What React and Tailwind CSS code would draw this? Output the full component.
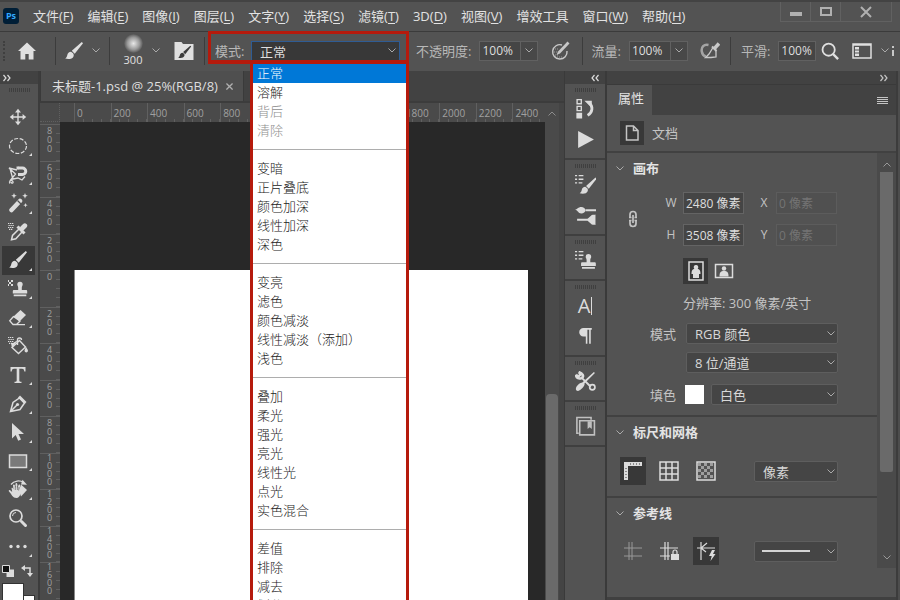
import React from 'react';
import clsx from 'clsx';

const menus = [
  ['文件', 'F'], ['编辑', 'E'], ['图像', 'I'], ['图层', 'L'], ['文字', 'Y'], ['选择', 'S'],
  ['滤镜', 'T'], ['3D', 'D'], ['视图', 'V'], ['增效工具'], ['窗口', 'W'], ['帮助', 'H'],
];

const blendGroups = [
  ['正常', '溶解', '背后', '清除'],
  ['变暗', '正片叠底', '颜色加深', '线性加深', '深色'],
  ['变亮', '滤色', '颜色减淡', '线性减淡（添加）', '浅色'],
  ['叠加', '柔光', '强光', '亮光', '线性光', '点光', '实色混合'],
  ['差值', '排除', '减去', '划分'],
];
const disabledModes = ['背后', '清除'];

// labels under the open blend menu stay empty
const hTicks = ['0', '200', '400', '600', '800', '', '', '', '', '1800', '2000', '2200', '2400'];
const vTicks = ['800', '600', '400', '200', '0', '200', '400', '600', '800', '1000', '1200', '1400', '1600'];

function Icon({ size = 'size-5', box = 20, children }) {
  return (
    <svg viewBox={`0 0 ${box} ${box}`} className={clsx('shrink-0', size)} fill="none" stroke="currentColor" strokeWidth="1.5" aria-hidden="true">
      {children}
    </svg>
  );
}

const solid = { fill: 'currentColor', stroke: 'none' };

const brushShape = (
  <g {...solid}>
    <path d="M17.800 1 7.800 9.800l2.900 3L19 2.200z" />
    <path d="M7 10.700c-2 0-3.400 1.400-3.700 3.300-.2 1.500-.9 2.800-2.200 3.600 3.500 1 7.400.4 8.400-2.200.5-1.300.2-2.400-.4-3.200z" />
  </g>
);

const stampShape = (
  <path {...solid} d="M10 2a3 3 0 0 1 3 3c0 1.500-1 2-1 3.500V11h4.500c1 0 1.500.5 1.500 1.500V15H2v-2.500c0-1 .5-1.500 1.500-1.500H8V8.500C8 7 7 6.500 7 5a3 3 0 0 1 3-3zM3 16.200h14V18H3z" />
);

const listShape = (
  <path strokeWidth="1.300" d="M0 1.500h2M3.500 1.500H8M0 5h2M3.500 5H8M0 8.500h2M3.500 8.500H7" />
);

const patternShape = (
  <path strokeWidth="1.200" strokeDasharray="1.300 .7" d="M0 1.500h6M.5 3.500h6M0 5.500h6M1 7.300h4" />
);

const tools = [
  ['移动工具', <>
    <path strokeWidth="1.400" d="M10 3v14M3 10h14" />
    <path {...solid} d="M10 1.800 13 5.400H7zM10 18.200l3-3.600H7zM1.800 10l3.600-3v6zM18.200 10l-3.600-3v6z" />
  </>],
  ['椭圆选框工具', <ellipse cx="10" cy="10" rx="8.500" ry="7.500" strokeWidth="1.200" strokeDasharray="4 1.600" />, 1],
  ['磁性套索工具', <>
    <path strokeWidth="1.300" d="m9 5-8-2 6.500 6L3 14.500l7-1.500 4 2 3-3.500M2 18.500c-1.500-2 1-4 2.500-2.500S4 19.500 3 17M2 3.500l3 11" />
    <path strokeWidth="3" d="M10 3h4.500a3 3 0 0 1 0 6.500H12" />
    <path {...solid} d="M8.500 1.500h2v3h-2zM10 8h2v3h-2z" />
  </>, 1],
  ['魔棒工具', <>
    <path strokeWidth="4.500" strokeLinecap="round" d="m3.500 17 8.500-9" />
    <path stroke="#535353" strokeWidth="1.200" d="m9.500 7.500 3.500 3.500" />
    <path {...solid} d="m6 0 .8 2 2 .8-2 .8L6 5.700l-.8-2.100-2-.8 2-.8zM17 0l.8 2 2 .8-2 .8-.8 2.100-.8-2.100-2-.8 2-.8zM17.500 10l.6 1.600 1.600.6-1.600.6-.6 1.700-.6-1.700-1.600-.6 1.600-.6z" />
  </>, 1],
  ['吸管工具', <>
    {patternShape}
    <path strokeWidth="1.500" d="m11 7-6.500 6.500-1 4.300 4.300-1L14 10" />
    <path strokeWidth="4.800" strokeLinecap="round" d="m14.500 6 2.300-2.300" />
    <path strokeWidth="3" d="m9.500 4.500 7 7" />
  </>],
  ['画笔工具', brushShape, 1],
  ['仿制图章工具', <>
    <g transform="translate(3 1) scale(.9)">{stampShape}</g>
    <path {...solid} d="M-1 1h2v2h-2zM3 1h2v2H3zM1 3h2v2H1zM-1 5h2v2h-2zM3 5h2v2H3z" />
  </>, 1],
  ['橡皮擦工具', <>
    <path {...solid} d="M12.500 2 18 7l-6.500 6.500-6-5z" />
    <path strokeWidth="1.300" d="m5.500 8.500-3.800 4.200 3.300 3.800h3.500l3.500-3.500zM8 16.700h9" />
  </>, 1],
  ['油漆桶工具', <>
    {patternShape}
    <path strokeWidth="1.400" d="M4 11.500 11.500 4.500l6 6.500-7 6.500zM9.500 9V4a2 2 0 0 1 4 0" />
    <path {...solid} d="M18 11c1.300 1.800 2 3 2 4a1.800 1.800 0 0 1-3.500 0c0-1 .5-2.200 1.500-4zM3 7h2l5-3-6 8z" />
  </>],
  ['横排文字工具', <path {...solid} d="M2.500 2h15v4.500h-1.200c-.3-2-.8-2.700-2.300-2.700h-2.700v11.700c0 1 .5 1.200 2.200 1.300V18H6.500v-1.200c1.700-.1 2.200-.3 2.200-1.300V3.800H6c-1.500 0-2 .7-2.300 2.700H2.500z" />, 1],
  ['钢笔工具', <>
    <path strokeWidth="1.500" d="M2.500 17.500 5 8.500l6.500-4.500 5 5-4.500 6.500zM2.500 17.500 9 11" />
    <path {...solid} d="m12 1.500 6.500 6.500-2 2L10 3.500z" />
    <circle {...solid} cx="9.500" cy="10.500" r="1.600" />
  </>, 1],
  ['路径选择工具', <path {...solid} d="M4 1v15.500l3.700-3.500 2.500 5.800 2.800-1.200-2.500-5.600H16z" />, 1],
  ['矩形工具', <rect x="1.500" y="4" width="17" height="12.500" fill="#7a7a7a" />, 1],
  ['抓手工具', <>
    <path {...solid} d="M13 5.500 19 11l-6 6.500-2-6z" />
    <path strokeWidth="1.300" d="M3 5.500C6 1.500 12 1 15.500 3.500" />
    <path {...solid} d="m14.500.8 4.500 5-6-.3zM3.500 9c.8-.5 1.500 0 2 1.500L5 6.500c0-1.200 1.500-1.400 1.800-.2l.7 3V5c0-1.200 1.600-1.200 1.800 0l.3 4.300.9-3.300c.4-1 1.800-.7 1.600.4l-.5 4 1-1.500c.7-1 2-.3 1.500.8C12.500 13 12.500 19 8.500 19 4.500 19 4 15.500 1 12.500c-.8-1 .3-2 1.200-1.300l2 1.800z" />
    <path stroke="#535353" strokeWidth=".6" d="M7.300 7v4M9.400 7v4M11 8l-.4 3.500" />
  </>, 1],
  ['缩放工具', <>
    <circle cx="8" cy="8" r="6" strokeWidth="1.700" />
    <path strokeWidth="1" d="M4.500 8A3.500 3.500 0 0 1 8 4.500" />
    <path strokeWidth="3" strokeLinecap="round" d="m13.500 13.500 4 4" />
  </>],
  ['编辑工具栏', <g {...solid}><circle cx="3" cy="9.500" r="1.700" /><circle cx="10" cy="9.500" r="1.700" /><circle cx="17" cy="9.500" r="1.700" /></g>, 1],
];

const panelGroups = [
  [
    ['历史记录', <>
      <path strokeWidth="1.300" d="M2 1.500h4v4H2zM2 8h4v4H2z" />
      <path {...solid} d="M1.300 14h5.500v5.500H1.300zM9 2.500h7v7z" />
      <path strokeWidth="2.600" d="M13.500 4.500c4 3.500 3.500 9-1.500 12" />
    </>],
    ['动作', <path {...solid} d="M3 2 18 10 3 18z" />],
  ],
  [
    ['画笔设置', <>{listShape}<g transform="translate(3.500 2.500) scale(.9)">{brushShape}</g></>],
    ['画笔', <>
      <path strokeWidth="1.800" d="M10 5h10M2 14h11" />
      <path {...solid} d="M0 4.500c2 0 3-2.500 6-2.500 2 0 4 1.500 4 3S8 8 6 8C3 8 3 5 0 4.500zM12 13l4-3.500c1.500-.5 3 0 3.500-.5v10c-.500-.500-2 0-3.500-.5L12 15z" />
    </>],
  ],
  [
    ['仿制源', <>{listShape}<g transform="translate(4 2) scale(.88)">{stampShape}</g></>],
  ],
  [
    ['字符', null],
    ['段落', <path {...solid} d="M9 2h7v1.500h-1V17h-1.500V3.500h-1.700V17h-1.500v-7H8a4 4 0 0 1 0-8z" />],
  ],
  [
    ['工具预设', <>
      <path strokeWidth="1.800" d="M6 6l9 9" />
      <path {...solid} d="M18 1 19 2 9 12c1 2-4 7-6 7s-2.500-1.500-2-3c.5-2 4-5 6-5z" />
      <path strokeWidth="2.400" d="M1 3.500 3 5.500 5.500 3 3.500 1M1 3.500C1 7 4 8 6.500 6.500S7 2 3.500 1" />
      <circle cx="16.500" cy="15.500" r="2.500" strokeWidth="1.600" />
    </>],
  ],
  [
    ['库', <g opacity=".8">
      <path strokeWidth="1.500" d="M3.500 16.500H1.800V1.500h13.500v2M4.500 4.500h14v13.500h-14z" />
      <path {...solid} d="M12 5h4v7.500l-2-1.800-2 1.800z" />
    </g>],
  ],
];

function Chevron({ className }) {
  return (
    <svg viewBox="0 0 8 5" className={clsx('h-[5px] w-2 shrink-0', className)} fill="none" stroke="currentColor" aria-hidden="true">
      <path d="m.5.500 3.500 3.500L7.500.5" />
    </svg>
  );
}

function Divider() {
  return <div className="h-7 w-px shrink-0 bg-[#3c3c3c]" />;
}

function Grip() {
  return (
    <svg viewBox="0 0 21 4" className="mx-auto h-1 w-[21px]" stroke="#3f3f3f" strokeDasharray="1 1" strokeWidth="4" aria-hidden="true">
      <path d="M0 2h21" />
    </svg>
  );
}

function PercentField({ id, label, arrow }) {
  return (
    <div className="flex shrink-0 items-center">
      <label htmlFor={id} className="mr-2 text-[#b8b8b8]">{label}:</label>
      <input id={id} defaultValue="100%" className={clsx('h-5 border border-[#616161] bg-[#454545] px-0.5 text-[12px] text-[#dedede]', arrow ? 'w-[42px]' : 'w-[38px]')} />
      {arrow && (
        <button aria-label={`${label}选项`} className="flex h-5 w-[17px] items-center justify-center border border-l-0 border-[#616161] bg-[#484848] text-[#aaa]">
          <Chevron />
        </button>
      )}
    </div>
  );
}

function Select({ id, label, value, className }) {
  return (
    <div className={clsx('relative flex items-center', className)}>
      <select id={id} aria-label={label} className="h-[21px] w-full appearance-none rounded-xs border border-[#5e5e5e] bg-[#454545] px-2 pb-0.5 text-[#d8d8d8]">
        <option>{value}</option>
      </select>
      <Chevron className="pointer-events-none absolute right-[3px] text-[#aaa]" />
    </div>
  );
}

function MenuBar() {
  return (
    <header className="flex h-8 shrink-0 items-center border-t-2 border-b border-t-[#434343] border-b-[#3b3b3b] bg-[#535353] text-[#e2e2e2]">
      <div className="mb-0.5 ml-[3px] flex size-4 shrink-0 items-center justify-center rounded-[3px] bg-[#001e36] text-[9px] font-bold text-[#31a8ff]">Ps</div>
      <nav className="mb-0.5 ml-[14px] flex gap-[14px] whitespace-nowrap">
        {menus.map(([name, key]) => (
          <button key={name}>{name}{key && <>(<u className="underline-offset-2">{key}</u>)</>}</button>
        ))}
      </nav>
      <div className="mr-2 ml-auto flex h-5 shrink-0 self-start border border-t-0 border-[#616161] text-[#b0b0b0]">
        <button aria-label="最小化" className="flex w-[30px] items-center justify-center border-r border-[#616161]">
          <span className="mt-1 h-1 w-3 bg-current" />
        </button>
        <button aria-label="最大化" className="flex w-[30px] items-center justify-center border-r border-[#616161]">
          <span className="h-[9px] w-3 border-2 border-current" />
        </button>
        <button aria-label="关闭" className="flex w-[50px] items-center justify-center">
          <Icon size="size-3" box={12}><path strokeWidth="2" d="m1 1 10 10M11 1 1 11" /></Icon>
        </button>
      </div>
    </header>
  );
}

function BlendMenu() {
  return (
    <ul role="listbox" aria-label="混合模式" className="absolute top-[25px] left-[42px] z-20 w-[159px] border-[3px] border-t-4 border-[#b51a0c] bg-white text-[13px] leading-[19px] text-[#222]">
      {blendGroups.map((group, i) => (
        <React.Fragment key={i}>
          {i > 0 && <li role="separator" className="flex h-[19px] items-center"><span className="h-px w-full bg-[#adadad]" /></li>}
          {group.map(mode => (
            <li
              key={mode}
              role="option"
              aria-selected={mode === '正常'}
              aria-disabled={disabledModes.includes(mode)}
              className={clsx(
                'h-[19px] pl-1 font-light whitespace-nowrap',
                mode === '正常' && 'bg-[#0078d7] text-white',
                disabledModes.includes(mode) && 'text-[#8e8e8e]',
              )}
            >
              {mode}
            </li>
          ))}
        </React.Fragment>
      ))}
    </ul>
  );
}

function OptionsBar() {
  return (
    <div className="flex h-[39px] shrink-0 items-center bg-[#535353] pb-0.5 text-[#e0e0e0]">
      <div className="ml-[3px] h-5 w-0.5 shrink-0 border-l-2 border-dotted border-[#3f3f3f]" />
      <button aria-label="主页" className="mr-[18px] ml-3">
        <Icon><path {...solid} d="M10 1.500 19 10h-2.500v8.500h-4.800V13H8.300v5.500H3.500V10H1z" /></Icon>
      </button>
      <Divider />
      <button aria-label="画笔预设" className="ml-2 flex items-center text-[#e0e0e0]">
        <Icon>{brushShape}</Icon>
        <Chevron className="ml-2 text-[#aaa]" />
      </button>
      <div className="ml-[9px]"><Divider /></div>
      <button aria-label="画笔大小" className="ml-3 flex items-center">
        <span className="flex w-[22px] flex-col items-center text-[11px] leading-[14px]">
          <span className="size-[19px] rounded-full bg-[radial-gradient(circle,#e8e8e8,#9a9a9a_45%,#535353_72%)]" />
          300
        </span>
        <Chevron className="ml-2 text-[#aaa]" />
      </button>
      <button aria-label="画笔设置面板" className="mr-[10px] ml-[14px]">
        <Icon>
          <path {...solid} d="M.5 1h7L9 3h10.500v16H.5z" />
          <g color="#3c3c3c" transform="translate(3.500 4) scale(.72)">{brushShape}</g>
        </Icon>
      </button>
      <Divider />
      <div className="relative ml-[3px] flex h-8 w-[201px] shrink-0 items-center">
        <label htmlFor="blend" className="ml-[7px] w-9 text-[#b8b8b8]">模式:</label>
        <div className="relative flex w-[149px] items-center">
          <select id="blend" className="h-5 w-full appearance-none border border-[#2f5c94] bg-[#383838] px-2 pb-0.5 text-[#dedede]">
            <option>正常</option>
          </select>
          <Chevron className="pointer-events-none absolute right-1 text-[#aaa]" />
        </div>
        <div className="pointer-events-none absolute inset-x-0 -top-1 z-30 h-[33px] border-[3px] border-b-4 border-[#b51a0c]" />
        <BlendMenu />
      </div>
      <div className="ml-[7px]"><PercentField id="opacity" label="不透明度" arrow /></div>
      <button aria-label="压力控制不透明度" className="mr-3 ml-3 text-[#c8c8c8]">
        <Icon>
          <path strokeWidth="1.400" d="M12 4a7.200 7.200 0 1 0 5 6" />
          <path strokeWidth="1" strokeDasharray="1 1" d="M3 8h6M2 11h6M3 14h5M5 16h7" opacity=".6" />
          <path {...solid} d="M17.500.500 19.500 2.500 10 12.500l-3.500 1.500L8 10.500z" />
        </Icon>
      </button>
      <Divider />
      <div className="ml-2"><PercentField id="flow" label="流量" arrow /></div>
      <button aria-label="喷枪" className="mr-[10px] ml-3 text-[#c8c8c8]">
        <Icon>
          <path strokeWidth="2.500" d="M8.500 4C4 3 1 6 1.800 10.500c.5 3 2 4.500 4 5" opacity=".7" />
          <path strokeWidth="1.300" d="M13 6.500 9 13l-3.500 3.500H11l5-.5V9.500z" />
          <path strokeWidth="3.500" d="m14 8 5-5.500" />
          <path strokeWidth="2" d="m12 5.500 4.500 4.500" />
        </Icon>
      </button>
      <Divider />
      <div className="ml-[10px]"><PercentField id="smooth" label="平滑" /></div>
      <button aria-label="搜索" className="ml-[5px]">
        <Icon size="size-[18px]"><circle cx="8.500" cy="8.500" r="6.800" strokeWidth="2" /><path strokeWidth="2.600" d="m13.500 13.500 5.500 5.500" /></Icon>
      </button>
      <button aria-label="工作区" className="ml-[13px] flex items-center">
        <Icon><path strokeWidth="1.500" d="M1 3h18v14H1zM1 4h18" /><path {...solid} d="M3 6h4v9H3z" /><path stroke="#535353" strokeWidth="1" d="M3 9h4M3 12h4" /></Icon>
        <Chevron className="ml-[9px] text-[#aaa]" />
      </button>
      <svg viewBox="0 0 3 14" className="ml-0.5 h-[14px] w-[3px] shrink-0" fill="#c8c8c8" aria-hidden="true"><path d="M1 2h2v2H1zM1 6h2v6H1z" /></svg>
    </div>
  );
}

function Toolbar() {
  return (
    <aside className="w-10 shrink-0 border-r-2 border-[#3c3c3c] bg-[#535353] text-[#dcdcdc]">
      <div className="flex h-[13px] items-center bg-[#424242] pl-[3px]">
        <Icon size="size-2" box={8}><path strokeWidth="1.200" d="m.5 1 2.500 3L.5 7M4.500 1 7 4 4.500 7" /></Icon>
      </div>
      <div className="h-[19px] pt-1"><Grip /></div>
      <div className="flex h-[458px] flex-col">
        {tools.map(([name, shape, more]) => (
          <button
            key={name}
            aria-label={name}
            className={clsx('relative ml-0.5 flex w-[33px] flex-1 items-center pl-1.5', name === '画笔工具' && 'bg-[#383838]')}
          >
            <Icon>{shape}</Icon>
            {more && <svg viewBox="0 0 4 4" className="absolute right-[3px] bottom-1 size-[3px]" fill="currentColor" aria-hidden="true"><path d="M4 0v4H0z" /></svg>}
          </button>
        ))}
      </div>
      <div className="flex h-[18px] items-center justify-between pt-0.5 pr-[5px] pl-0.5">
        <button aria-label="默认颜色">
          <Icon size="size-3" box={12}>
            <path {...solid} d="M4.500 4.500H12V12H4.500z" />
            <path fill="#111" strokeWidth="1" d="M.5.500h7v7h-7z" />
          </Icon>
        </button>
        <button aria-label="切换颜色">
          <Icon size="size-3" box={12}>
            <path strokeWidth="1.500" d="M3 3h6v6" />
            <path {...solid} d="M0 3 4 0v6zM9 12 6 8h6z" />
          </Icon>
        </button>
      </div>
      <div className="relative mt-1 ml-0.5 h-8 w-8">
        <button aria-label="背景色" className="absolute top-3 left-3 size-[21px] border border-[#333] bg-white" />
        <button aria-label="前景色" className="absolute top-0 left-0 size-[22px] border border-[#333] bg-white" />
      </div>
    </aside>
  );
}

function Document() {
  return (
    <main className="flex min-w-0 flex-1 flex-col bg-[#424242]">
      <div className="flex h-8 shrink-0 border-b-2 border-[#3c3c3c]">
        <div className="flex items-center border-x border-[#3a3a3a] bg-[#4f4f4f] pr-[10px] pl-[11px] whitespace-nowrap text-[#dedede]">
          未标题-1.psd @ 25%(RGB/8)
          <button aria-label="关闭文档" className="ml-2 text-[#b0b0b0]">
            <Icon size="size-[7px]" box={8}><path strokeWidth="1.500" d="m.5.500 7 7M7.500.5l-7 7" /></Icon>
          </button>
        </div>
      </div>
      <div className="flex min-h-0 flex-1">
        <div className="flex min-w-0 flex-1 flex-col overflow-hidden">
          <div className="flex h-[19px] shrink-0 bg-[#4a4a4a] text-[10px] text-[#a0a0a0]">
            <div className="w-5 shrink-0 border-r border-b border-dotted border-[#606060]" />
            <div className="ml-[14px] flex w-[475px] shrink-0">
              {hTicks.map((tick, i) => (
                <div key={i} className="flex min-w-0 flex-1 flex-col border-l border-[#606060]">
                  <span className="h-4 pl-0.5 leading-5">{tick}</span>
                  <span className="flex h-[3px]">
                    {[1, 2, 3, 4].map(n => <i key={n} className="flex-1 border-r border-[#606060]" />)}
                  </span>
                </div>
              ))}
            </div>
          </div>
          <div className="flex min-h-0 flex-1">
            <div className="w-5 shrink-0 overflow-hidden bg-[#4a4a4a] pt-0.5 text-[9px] leading-[9px] text-[#a0a0a0]">
              <div className="flex h-[475px] flex-col">
                {vTicks.map((tick, i) => (
                  <div key={i} className="flex min-h-0 flex-1 justify-end border-t border-[#606060]">
                    <span className={clsx('mr-[3px] w-1.5 break-all', tick.length > 3 ? 'leading-[8px]' : 'pt-px')}>{tick}</span>
                    <span className="flex w-1 flex-col">
                      {[1, 2, 3, 4].map(n => <i key={n} className="flex-1 border-b border-[#606060]" />)}
                    </span>
                  </div>
                ))}
              </div>
            </div>
            <div className="min-w-0 flex-1 bg-[#282828] pt-[148px] pr-[17px] pl-[14px]">
              <div className="h-full border-l border-[#888] bg-white" />
            </div>
          </div>
        </div>
        <div className="flex w-[14px] shrink-0 flex-col items-center bg-[#4a4a4a] pt-2 text-[#8c8c8c]">
          <Chevron className="rotate-180" />
          <div className="mt-auto h-[206px] w-3 rounded-t-sm bg-[#6a6a6a]" />
        </div>
        <div className="w-[5px] shrink-0 bg-[#444]" />
      </div>
    </main>
  );
}

function PanelDock() {
  return (
    <aside className="w-[43px] shrink-0 border-r-2 border-l border-[#3a3a3a] bg-[#535353] text-[#dcdcdc]">
      <div className="flex h-[13px] items-center justify-end bg-[#424242] pr-1.5">
        <Icon size="size-2" box={8}><path strokeWidth="1.200" d="M3.500 1 1 4l2.500 3M7.500 1 5 4l2.500 3" /></Icon>
      </div>
      {panelGroups.map((group, i) => (
        <div key={i} className="border-b-2 border-[#3f3f3f] pb-[3px]">
          <div className="h-[9px] pt-1"><Grip /></div>
          {group.map(([name, shape]) => (
            <button key={name} aria-label={name} className="flex h-[31px] w-full items-center justify-center">
              {shape ? <Icon size="size-[21px]">{shape}</Icon> : <span className="flex items-center text-[20px]">A<i className="ml-px h-[18px] w-px bg-current" /></span>}
            </button>
          ))}
        </div>
      ))}
    </aside>
  );
}

function SectionTitle({ children }) {
  return (
    <h2 className="flex h-8 items-center pb-0.5 font-bold text-[#e4e4e4]">
      <Chevron className="mr-[9px] ml-[9px] text-[#aaa]" />
      {children}
    </h2>
  );
}

function SizeField({ id, value, disabled }) {
  return (
    <>
      <label htmlFor={id} className="w-3 justify-self-end text-center text-[12px] text-[#c4c4c4]">{id}</label>
      <input
        id={id}
        defaultValue={value}
        disabled={disabled}
        className={clsx('ml-1.5 h-[22px] w-[61px] border px-0.5 text-[12px]', disabled ? 'border-[#5c5c5c] bg-[#505050] text-[#747474]' : 'border-[#646464] bg-[#454545] text-[#dedede]')}
      />
    </>
  );
}

function Properties() {
  return (
    <section className="flex w-[289px] shrink-0 flex-col bg-[#535353] text-[#c4c4c4]">
      <div className="flex h-[14px] shrink-0 items-center justify-end border-b border-[#3a3a3a] bg-[#424242] pr-2">
        <Icon size="size-2" box={8}><path strokeWidth="1.200" d="m.5 1 2.500 3L.5 7M4.500 1 7 4 4.500 7" /></Icon>
      </div>
      <div className="flex h-[30px] shrink-0 items-center justify-between bg-[#424242] pr-2">
        <button role="tab" aria-selected="true" className="h-full bg-[#535353] pr-2 pb-1 pl-[11px] text-[#e2e2e2]">属性</button>
        <button aria-label="面板菜单">
          <Icon size="size-[11px]" box={11}><path strokeWidth="1" d="M0 2.500h11M0 4.500h11M0 6.500h11M0 8.500h11" /></Icon>
        </button>
      </div>
      <div className="flex h-[38px] shrink-0 items-center border-b-2 border-[#414141] pl-[13px]">
        <span className="flex size-6 items-center justify-center bg-[#383838]">
          <Icon size="size-4" box={16}><path d="M2.500 1h7L14 5.500V15H2.500zM9.500 1v4.500H14" /></Icon>
        </span>
        <span className="ml-2">文档</span>
      </div>
      <div className="flex h-[415px] shrink-0">
        <div className="flex-1">
          <SectionTitle>画布</SectionTitle>
          <div className="flex items-center pt-[7px]">
            <button aria-label="链接宽高" className="mr-[22px] ml-4">
              <Icon size="size-5">
                <path strokeWidth="1.700" d="M7 8.500V5.500a3 3 0 0 1 6 0v3M7 11.500v3a3 3 0 0 0 6 0v-3M10 6v8M6 8.500h2.500M11.500 8.500H14M6 11.500h2.500M11.500 11.500H14" />
              </Icon>
            </button>
            <div className="grid grid-cols-[12px_67px_26px_67px] items-center gap-y-[10px]">
              <SizeField id="W" value="2480 像素" />
              <SizeField id="X" value="0 像素" disabled />
              <SizeField id="H" value="3508 像素" />
              <SizeField id="Y" value="0 像素" disabled />
            </div>
          </div>
          <div className="flex items-center gap-1.5 pt-3 pl-[76px]">
            <button aria-label="纵向" className="flex h-[26px] w-[25px] items-center justify-center bg-[#383838] text-[#dcdcdc]">
              <Icon><path d="M3 1h14v18H3z" /><path {...solid} d="M10 4a2.200 2.200 0 0 1 1.700 3.700C14 8.500 14.500 10 14.500 13H13v4H7v-4H5.500c0-3 .5-4.500 2.800-5.300A2.200 2.200 0 0 1 10 4z" /></Icon>
            </button>
            <button aria-label="横向" className="text-[#dcdcdc]">
              <Icon><path d="M1.500 3.500h17v13h-17z" /><circle {...solid} cx="10" cy="7.500" r="2.200" /><path {...solid} d="M5.500 15.500c0-4 1-5.500 4.500-5.500s4.500 1.500 4.500 5.500z" /></Icon>
            </button>
          </div>
          <p className="pt-[9px] pl-[76px] leading-5">分辨率: 300 像素/英寸</p>
          <div className="grid grid-cols-[26px_1fr] items-center gap-x-[10px] gap-y-2 pt-[10px] pr-[39px] pl-[43px]">
            <label htmlFor="mode" className="leading-5">模式</label>
            <Select id="mode" value="RGB 颜色" />
            <Select id="depth" label="位深度" value="8 位/通道" className="col-start-2" />
          </div>
          <div className="flex items-center pt-[11px] pr-[39px] pl-[43px]">
            <label htmlFor="fill">填色</label>
            <button aria-label="填充颜色" className="mr-[7px] ml-[9px] size-[19px] bg-white" />
            <Select id="fill" value="白色" className="flex-1" />
          </div>
          <div className="mt-[10px] border-t-2 border-[#414141]">
            <SectionTitle>标尺和网格</SectionTitle>
            <div className="flex items-center pt-2 pr-[39px] pl-[13px] text-[#dcdcdc]">
              <button aria-label="标尺" className="flex h-7 w-[26px] items-center justify-center bg-[#383838]">
                <Icon><path strokeWidth="4" d="M3 19V3h16" /><path stroke="#383838" strokeWidth="1" strokeDasharray="1 2" d="M7 3h11M3 7v11" /></Icon>
              </button>
              <button aria-label="网格" className="ml-[13px]">
                <Icon><path d="M1 1h18v18H1zM7 1v18M13 1v18M1 7h18M1 13h18" /></Icon>
              </button>
              <button aria-label="透明度网格" className="ml-[17px]">
                <Icon>
                  <path d="M1 1h18v18H1z" />
                  <path {...solid} opacity=".55" d="M2 2h3v3H2zM8 2h3v3H8zM14 2h3v3h-3zM5 5h3v3H5zM11 5h3v3h-3zM2 8h3v3H2zM8 8h3v3H8zM14 8h3v3h-3zM5 11h3v3H5zM11 11h3v3h-3zM2 14h3v3H2zM8 14h3v3H8zM14 14h3v3h-3z" />
                </Icon>
              </button>
              <Select id="unit" label="单位" value="像素" className="ml-auto w-[84px]" />
            </div>
          </div>
          <div className="mt-[11px] border-t-2 border-[#414141]">
            <SectionTitle>参考线</SectionTitle>
            <div className="flex items-center pt-[7px] pr-[39px] pl-4 text-[#dcdcdc]">
              <button aria-label="显示参考线" className="text-[#999]">
                <Icon><path strokeWidth="1" d="M6 1v18M9 1v18M1 7h18M1 15h18" /></Icon>
              </button>
              <button aria-label="锁定参考线" className="ml-4">
                <Icon>
                  <path strokeWidth="1.200" d="M6 1v18M9 1v18M1 7h18M1 15h10" />
                  <path {...solid} d="M12 13h8v6h-8z" />
                  <path strokeWidth="1.200" d="M14 13v-2a2 2 0 0 1 4 0v2" />
                </Icon>
              </button>
              <button aria-label="智能参考线" className="ml-[14px] flex h-7 w-[26px] items-center justify-center bg-[#383838]">
                <Icon>
                  <path strokeWidth="1.200" d="M5 1v18M1 7h18M11 2 5 7l5 4" />
                  <path {...solid} d="M16 9h3l-2 4h2.500l-5 7 1.200-5H13z" />
                </Icon>
              </button>
              <div className="relative ml-auto flex items-center">
                <Select id="line" label="参考线样式" value="" className="w-[84px]" />
                <span className="pointer-events-none absolute left-2 h-0.5 w-12 bg-[#d4d4d4]" />
              </div>
            </div>
          </div>
        </div>
        <div className="flex w-[19px] shrink-0 flex-col items-center bg-[#4a4a4a] pt-[9px] pb-2 text-[#999]">
          <Chevron className="rotate-180" />
          <div className="mt-[5px] h-[300px] w-[13px] rounded-b-xs bg-[#6a6a6a]" />
          <Chevron className="mt-auto" />
        </div>
      </div>
      <div className="mt-auto h-[3px] shrink-0 bg-[#404040]" />
    </section>
  );
}

export default function App() {
  return (
    <div className="flex h-screen flex-col overflow-hidden bg-[#4d4d4d] font-['Open_Sans','Noto_Sans_CJK_SC',sans-serif] text-[13px] leading-5">
      <MenuBar />
      <OptionsBar />
      <div className="flex min-h-0 flex-1">
        <Toolbar />
        <Document />
        <PanelDock />
        <Properties />
        <div className="w-1 shrink-0 border-l-2 border-[#3c3c3c]" />
      </div>
    </div>
  );
}
